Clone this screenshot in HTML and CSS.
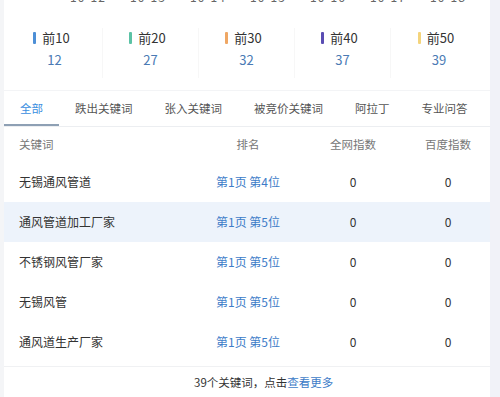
FILE: index.html
```html
<!DOCTYPE html>
<html lang="zh">
<head>
<meta charset="utf-8">
<link rel="stylesheet" href="styles.css">
</head>
<body>
<div class="page">
  <div class="side-left"></div>
  <main class="panel">
    <div class="ticks">
      <span>10-12</span><span>10-13</span><span>10-14</span><span>10-15</span><span>10-16</span><span>10-17</span><span>10-18</span>
    </div>
    <section class="stats">
      <div class="stat"><div class="stat-label"><i class="bar c1"></i>前10</div><div class="stat-num">12</div></div>
      <div class="stat"><div class="stat-label"><i class="bar c2"></i>前20</div><div class="stat-num">27</div></div>
      <div class="stat"><div class="stat-label"><i class="bar c3"></i>前30</div><div class="stat-num">32</div></div>
      <div class="stat"><div class="stat-label"><i class="bar c4"></i>前40</div><div class="stat-num">37</div></div>
      <div class="stat"><div class="stat-label"><i class="bar c5"></i>前50</div><div class="stat-num">39</div></div>
    </section>
    <nav class="tabs">
      <span class="tab active">全部</span>
      <span class="tab">跌出关键词</span>
      <span class="tab">张入关键词</span>
      <span class="tab">被竞价关键词</span>
      <span class="tab">阿拉丁</span>
      <span class="tab">专业问答</span>
    </nav>
    <div class="table">
      <div class="row head"><span class="kw">关键词</span><span>排名</span><span>全网指数</span><span>百度指数</span></div>
      <div class="row"><span class="kw">无锡通风管道</span><span class="rank">第1页 第4位</span><span>0</span><span>0</span></div>
      <div class="row hl"><span class="kw">通风管道加工厂家</span><span class="rank">第1页 第5位</span><span>0</span><span>0</span></div>
      <div class="row"><span class="kw">不锈钢风管厂家</span><span class="rank">第1页 第5位</span><span>0</span><span>0</span></div>
      <div class="row"><span class="kw">无锡风管</span><span class="rank">第1页 第5位</span><span>0</span><span>0</span></div>
      <div class="row"><span class="kw">通风道生产厂家</span><span class="rank">第1页 第5位</span><span>0</span><span>0</span></div>
    </div>
    <div class="footer">39个关键词，点击<a class="more">查看更多</a></div>
  </main>
  <div class="side-right"></div>
</div>
</body>
</html>
```
FILE: styles.css
```css
* { box-sizing: border-box; margin: 0; padding: 0; }
html, body { width: 500px; height: 397px; overflow: hidden; background: #fff; }
body { font-family: "Noto Sans CJK SC", "Noto Sans", sans-serif; color: #333; font-size: 12px; }
.page { display: flex; height: 397px; }
.side-left { width: 4px; background: #f4f5f7; flex: none; }
.side-right { width: 10px; background: #f1f2f8; flex: none; }
.panel { width: 486px; flex: none; background: #fff; display: flex; flex-direction: column; }

.ticks { height: 5px; overflow: hidden; display: flex; padding-left: 66px; }
.ticks span { width: 60px; font-size: 12px; line-height: 14px; margin-top: -10px; color: #666; letter-spacing: 1px; flex: none; }

.stats { display: flex; padding: 23px 3px 0; height: 87px; border-bottom: 1px solid #f3f4f6; }
.stat { width: 96px; height: 50px; display: flex; flex-direction: column; align-items: center; border-right: 1px solid #f7f7f7; }
.stat:last-child { border-right: none; }
.stat-label { font-size: 13px; line-height: 20px; color: #333; display: flex; align-items: center; margin-left: -6px; }
.bar { display: inline-block; width: 3px; height: 12px; margin-right: 6px; border-radius: 1px; }
.c1 { background: #4d8fd6; }
.c2 { background: #5bc2a5; }
.c3 { background: #efa764; }
.c4 { background: #5a4db3; }
.c5 { background: #f4d47c; }
.stat-num { font-size: 13px; line-height: 20px; margin-top: 2px; color: #4a7ab4; }

.tabs { display: flex; height: 36px; border-bottom: 1px solid #eceef1; }
.tab { flex: none; white-space: nowrap; padding: 0 16px; line-height: 34px; font-size: 11.5px; color: #555; }
.tab.active { color: #3a8ee0; border-bottom: 2px solid #8ea0b4; }

.table { display: flex; flex-direction: column; }
.row { display: grid; grid-template-columns: 196px 96px 114px 76px; height: 40px; align-items: center; font-size: 12px; color: #333; }
.row span { text-align: center; white-space: nowrap; }
.row .kw { text-align: left; padding-left: 15px; }
.row.head { height: 35px; color: #777; font-size: 11.5px; }
.row.hl { background: #edf3fb; }
.rank { color: #3d7cc8; }

.footer { margin-top: 4px; border-top: 1px solid #f0f1f3; height: 32px; line-height: 30px; padding-left: 190px; font-size: 11.5px; color: #333; white-space: nowrap; }
.more { color: #3d7cc8; }
```
